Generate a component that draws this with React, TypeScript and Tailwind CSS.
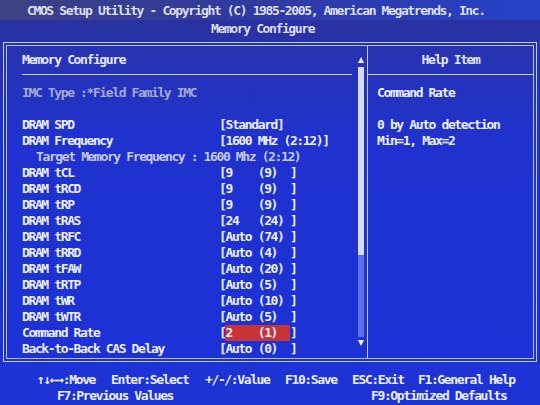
import React from "react";

type Row = { l: string; v?: string; target?: boolean; hl?: boolean };

const rows: Row[] = [
  { l: "DRAM SPD", v: "[Standard]" },
  { l: "DRAM Frequency", v: "[1600 MHz (2:12)]" },
  { l: "Target Memory Frequency : 1600 Mhz (2:12)", target: true },
  { l: "DRAM tCL", v: "[9    (9)  ]" },
  { l: "DRAM tRCD", v: "[9    (9)  ]" },
  { l: "DRAM tRP", v: "[9    (9)  ]" },
  { l: "DRAM tRAS", v: "[24   (24) ]" },
  { l: "DRAM tRFC", v: "[Auto (74) ]" },
  { l: "DRAM tRRD", v: "[Auto (4)  ]" },
  { l: "DRAM tFAW", v: "[Auto (20) ]" },
  { l: "DRAM tRTP", v: "[Auto (5)  ]" },
  { l: "DRAM tWR", v: "[Auto (10) ]" },
  { l: "DRAM tWTR", v: "[Auto (5)  ]" },
  { l: "Command Rate", v: "[2    (1)  ]", hl: true },
  { l: "Back-to-Back CAS Delay", v: "[Auto (0)  ]" },
];

function Value({ v, hl }: { v: string; hl?: boolean }) {
  if (!hl) return <span className="whitespace-pre">{v}</span>;
  return (
    <span className="whitespace-pre flex">
      <span>{v[0]}</span>
      <span className="bg-[#c83436]">{v.slice(1, v.length - 1)}</span>
      <span>{v[v.length - 1]}</span>
    </span>
  );
}

export default function App() {
  const font =
    "font-['DejaVu_Sans_Mono','Liberation_Mono',monospace] font-bold text-[13px] tracking-[-1.38px] leading-[16px]";
  return (
    <div
      className={`w-[540px] h-[405px] overflow-hidden flex flex-col text-[#eceeff] bg-[linear-gradient(180deg,#2b3196_0px,#2633b4_60px,#1f32cf_140px,#1c32d8_100%)] ${font}`}
    >
      {/* header */}
      <div className="h-[20px] flex items-end pb-[1px] pl-[27px] text-[#dcdeea] bg-[linear-gradient(90deg,#3c4282,#303aa0_45%,#2640c8)] whitespace-pre">
        CMOS Setup Utility - Copyright (C) 1985-2005, American Megatrends, Inc.
      </div>
      <div className="h-[22px] pt-[1px] pl-[211px] text-[#dcdeee] whitespace-pre">Memory Configure</div>

      {/* main box */}
      <div className="mx-[3px] h-[320px] border border-[#c4ccf2] p-[2px]">
        <div className="h-full border border-[#b4bdf0] flex">
          {/* left panel */}
          <div className="w-[360px] flex pl-[15px] pr-[3px]">
            <div className="w-[330px] flex flex-col">
              <div className="h-[28px] flex items-center text-[#e4e6ff]">Memory Configure</div>
              <div className="h-[1px] bg-[#c8d0f4]" />
              <div className="h-[10px]" />
              <div className="h-[16px] text-[#a6aad2] whitespace-pre">IMC Type :*Field Family IMC</div>
              <div className="h-[16px]" />
              {rows.map((r, i) =>
                r.target ? (
                  <div key={i} className="h-[16px] pl-[14px] text-[#c4c8ea] whitespace-pre">
                    {r.l}
                  </div>
                ) : (
                  <div key={i} className="h-[16px] flex">
                    <span className="w-[197px] whitespace-pre">{r.l}</span>
                    <Value v={r.v!} hl={r.hl} />
                  </div>
                )
              )}
            </div>
            {/* scrollbar */}
            <div className="ml-[6px] w-[6px] flex flex-col pt-[11px]">
              <svg width="6" height="6" viewBox="0 0 6 6" className="block">
                <polygon points="3,0 6,6 0,6" fill="#f0f2ff" />
              </svg>
              <div className="h-[4px]" />
              <div className="h-[188px] bg-[#d6dcf8]" />
              <div className="h-[82px] bg-[#5a72ea]" />
              <div className="h-[3px]" />
              <svg width="6" height="6" viewBox="0 0 6 6" className="block">
                <polygon points="0,0 6,0 3,6" fill="#f0f2ff" />
              </svg>
            </div>
          </div>
          {/* divider */}
          <div className="w-[1px] bg-[#c4ccf2]" />
          {/* right panel */}
          <div className="flex-1 flex flex-col">
            <div className="h-[28px] flex items-center justify-center text-[#e4e6ff]">Help Item</div>
            <div className="h-[1px] bg-[#c8d0f4]" />
            <div className="h-[10px]" />
            <div className="pl-[9px]">
              <div className="h-[16px] whitespace-pre">Command Rate</div>
              <div className="h-[16px]" />
              <div className="h-[16px] whitespace-pre">0 by Auto detection</div>
              <div className="h-[16px] whitespace-pre">Min=1, Max=2</div>
            </div>
          </div>
        </div>
      </div>

      {/* bottom bar */}
      <div className="flex-1 pt-[10px] bg-[#1d33d6]">
        <div className="h-[16px] flex pl-[37px] whitespace-pre">
          <span className="w-[74px]">↑↓←→:Move</span>
          <span className="w-[94px]">Enter:Select</span>
          <span className="w-[80px]">+/-/:Value</span>
          <span className="w-[67px]">F10:Save</span>
          <span className="w-[66px]">ESC:Exit</span>
          <span>F1:General Help</span>
        </div>
        <div className="h-[16px] flex pl-[57px] whitespace-pre">
          <span className="w-[314px]">F7:Previous Values</span>
          <span>F9:Optimized Defaults</span>
        </div>
      </div>
    </div>
  );
}
